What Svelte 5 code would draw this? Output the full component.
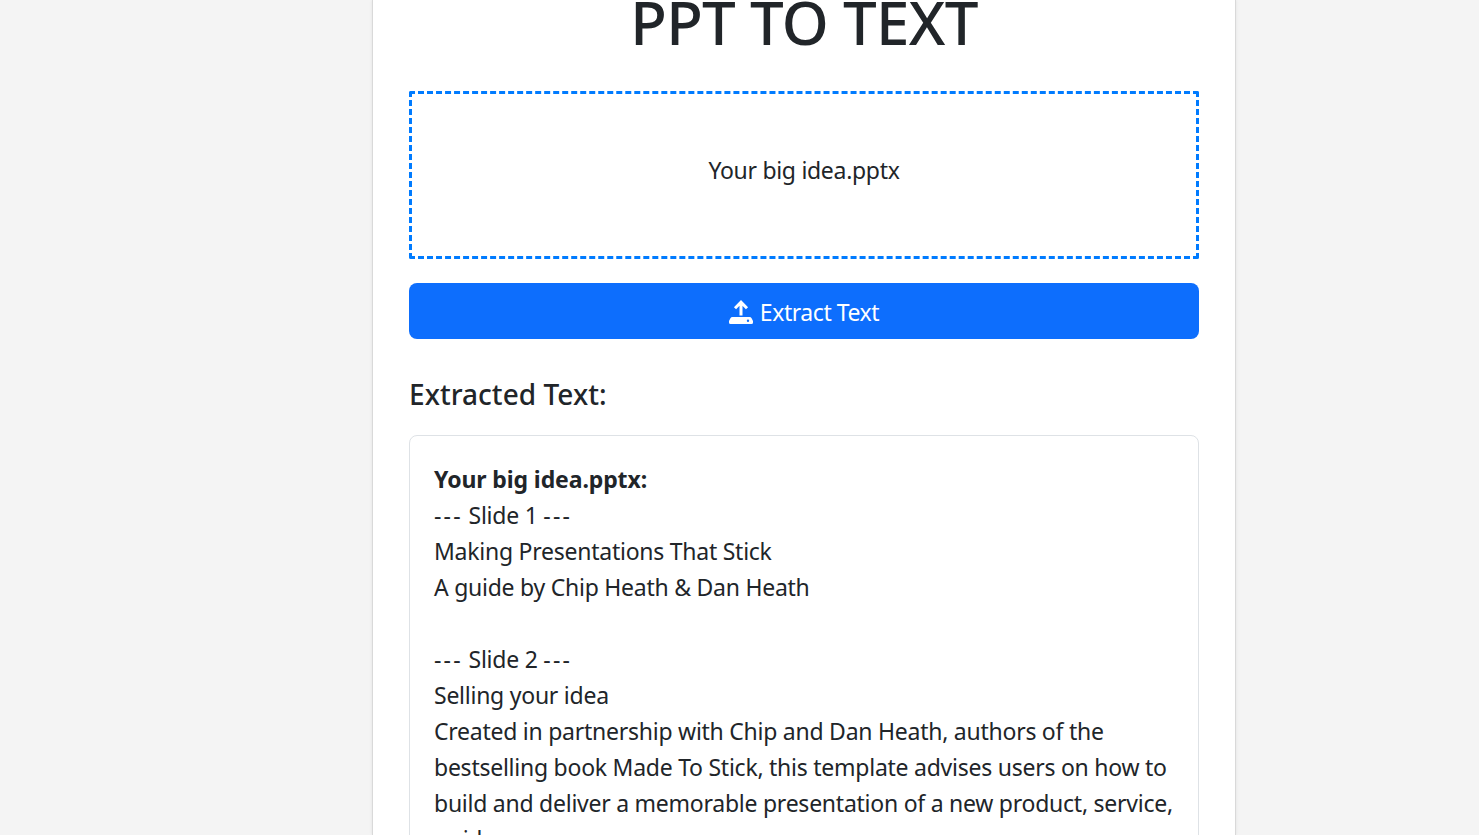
<script lang="ts">
	const intro = ['Making Presentations That Stick', 'A guide by Chip Heath & Dan Heath']
	const body = [
		'Selling your idea',
		'Created in partnership with Chip and Dan Heath, authors of the bestselling book Made To Stick, this template advises users on how to build and deliver a memorable presentation of a new product, service, or idea.',
	]
</script>

<main class="page">
	<section class="card">
		<h1>PPT TO TEXT</h1>

		<div class="dropzone">Your big idea.pptx</div>

		<button class="extract" type="button">
			<svg width="24" height="24" viewBox="0 0 24 24" aria-hidden="true">
				<path d="M12 15.5V2.2M6 8.2 12 2.2 18 8.2" fill="none" stroke="currentColor" stroke-width="3" />
				<path
					fill="currentColor"
					fill-rule="evenodd"
					d="M3.5 17H20.5Q22 17 22.6 18.2L24 21V22.5Q24 24 22.5 24H1.5Q0 24 0 22.5V21L1.4 18.2Q2 17 3.5 17ZM19 19.6a1.2 1.2 0 1 0 0 2.4 1.2 1.2 0 0 0 0-2.4Z"
				/>
			</svg>
			<span>Extract Text</span>
		</button>

		<h4>Extracted Text:</h4>

		<div class="result">
			<strong>Your big idea.pptx:</strong>
			<p class="divider"><span>---</span> Slide 1 <span>---</span></p>
			{#each intro as line}
				<p>{line}</p>
			{/each}
			<p class="blank"></p>
			<p class="divider"><span>---</span> Slide 2 <span>---</span></p>
			{#each body as line}
				<p>{line}</p>
			{/each}
		</div>
	</section>
</main>

<style>
	:global(html),
	:global(body) {
		height: 100%;
		overflow: hidden;
	}

	:global(body) {
		margin: 0;
		background: #f4f4f4;
		color: #212529;
		font-family: 'Noto Sans', 'Open Sans', sans-serif;
		font-size: 23px;
		line-height: 36px;
	}

	.page {
		display: flex;
		justify-content: center;
		padding-left: 129px;
	}

	.card {
		width: 790px;
		height: 835px;
		padding: 0 36px;
		overflow: hidden;
		background: #fff;
		border-left: 1px solid #d9d9d9;
		border-right: 1px solid #d9d9d9;
		box-shadow: 0 0 3px rgba(0, 0, 0, 0.08);
	}

	h1 {
		margin: -14px 0 0;
		height: 81px;
		font-size: 60px;
		line-height: 72px;
		font-weight: 500;
		text-align: center;
		letter-spacing: -0.7px;
	}

	.dropzone {
		display: flex;
		align-items: center;
		justify-content: center;
		box-sizing: border-box;
		height: 168px;
		margin-top: 24px;
		padding-bottom: 10px;
		border: 3px dashed #007bff;
		border-radius: 2px;
		letter-spacing: -0.3px;
	}

	.extract {
		display: flex;
		align-items: center;
		justify-content: center;
		gap: 7px;
		width: 100%;
		height: 56px;
		margin-top: 24px;
		padding: 2px 0 0;
		border: 0;
		border-radius: 8px;
		background: #0d6efd;
		color: #fff;
		font: inherit;
		letter-spacing: -0.45px;
	}

	h4 {
		margin: 37px 0 0;
		height: 59px;
		font-size: 28px;
		line-height: 36px;
		font-weight: 500;
		letter-spacing: 0.05px;
	}

	.result {
		padding: 25px 24px 24px;
		border: 1px solid #dee2e6;
		border-radius: 8px;
		letter-spacing: -0.25px;
	}

	.result strong {
		display: block;
		font-weight: 700;
		letter-spacing: -0.1px;
	}

	.result p {
		margin: 0;
	}

	.result .blank {
		height: 36px;
	}

	.divider span {
		letter-spacing: 2.2px;
	}
</style>
